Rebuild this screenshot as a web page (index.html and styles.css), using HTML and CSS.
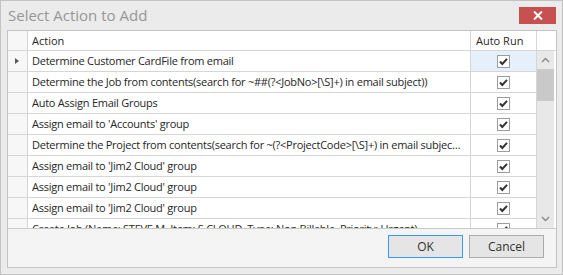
FILE: index.html
```html
<!DOCTYPE html>
<html lang="en">
<head>
  <meta charset="UTF-8" />
  <title>Select Action to Add</title>
  <link rel="stylesheet" href="styles.css">
</head>
<body>
  <div class="window">
    <div class="titlebar">
      <span class="title">Select Action to Add</span>
      <button class="close" title="Close">
        <svg width="10" height="9" viewBox="0 0 10 9"><path d="M1 0.5 L9 8.5 M9 0.5 L1 8.5" stroke="#fff" stroke-width="2"/></svg>
      </button>
    </div>

    <div class="frame">
      <div class="grid">
        <div class="head">
          <div class="ind"></div>
          <div class="col-action">Action</div>
          <div class="col-run">Auto Run</div>
          <div class="col-pad"></div>
        </div>
        <div class="body">
          <div class="rows">
            <div class="row current">
              <div class="ind"><span class="arrow"></span></div>
              <div class="col-action">Determine Customer CardFile from email</div>
              <div class="col-run focus"><span class="check"></span></div>
            </div>
            <div class="row">
              <div class="ind"></div>
              <div class="col-action">Determine the Job from contents(search for ~##(?&lt;JobNo&gt;[\S]+) in email subject))</div>
              <div class="col-run"><span class="check"></span></div>
            </div>
            <div class="row">
              <div class="ind"></div>
              <div class="col-action">Auto Assign Email Groups</div>
              <div class="col-run"><span class="check"></span></div>
            </div>
            <div class="row">
              <div class="ind"></div>
              <div class="col-action">Assign email to 'Accounts' group</div>
              <div class="col-run"><span class="check"></span></div>
            </div>
            <div class="row">
              <div class="ind"></div>
              <div class="col-action">Determine the Project from contents(search for ~(?&lt;ProjectCode&gt;[\S]+) in email subject))</div>
              <div class="col-run"><span class="check"></span></div>
            </div>
            <div class="row">
              <div class="ind"></div>
              <div class="col-action">Assign email to 'Jim2 Cloud' group</div>
              <div class="col-run"><span class="check"></span></div>
            </div>
            <div class="row">
              <div class="ind"></div>
              <div class="col-action">Assign email to 'Jim2 Cloud' group</div>
              <div class="col-run"><span class="check"></span></div>
            </div>
            <div class="row">
              <div class="ind"></div>
              <div class="col-action">Assign email to 'Jim2 Cloud' group</div>
              <div class="col-run"><span class="check"></span></div>
            </div>
            <div class="row">
              <div class="ind"></div>
              <div class="col-action">Create Job (Name: STEVE M, Item: S CLOUD, Type: Non Billable, Priority: Urgent)</div>
              <div class="col-run"><span class="check"></span></div>
            </div>
          </div>
          <div class="scrollbar">
            <div class="sb-btn">
              <svg width="9" height="6" viewBox="0 0 9 6"><path d="M1 5 L4.5 1.5 L8 5" fill="none" stroke="#8a8a8a" stroke-width="1.4"/></svg>
            </div>
            <div class="sb-track"><div class="sb-thumb"></div></div>
            <div class="sb-btn">
              <svg width="9" height="6" viewBox="0 0 9 6"><path d="M1 1 L4.5 4.5 L8 1" fill="none" stroke="#8a8a8a" stroke-width="1.4"/></svg>
            </div>
          </div>
        </div>
      </div>

      <div class="buttons">
        <button class="btn default">OK</button>
        <button class="btn">Cancel</button>
      </div>
    </div>
  </div>

  <script>
    // draw the check glyph into every checkbox cell
    const tick = '<svg width="13" height="13" viewBox="0 0 13 13">' +
      '<rect x="0.5" y="0.5" width="12" height="12" fill="#fff" stroke="#9c9c9c"/>' +
      '<path d="M3 6.5 L5.3 9 L10 3.8" fill="none" stroke="#333" stroke-width="2"/></svg>';
    document.querySelectorAll('.check').forEach(el => el.innerHTML = tick);
  </script>
</body>
</html>
```

FILE: styles.css
```css
* {
  box-sizing: border-box;
}
body {
  margin: 0;
  background: #ebebeb;
  font-family: 'Open Sans', 'Noto Sans', sans-serif;
  font-size: 11px;
  color: #262626;
}
.window {
  width: 563px;
  height: 275px;
  border: 1px solid #c3c3c3;
  background: #ebebeb;
  padding: 0 5px 6px 6px;
  display: flex;
  flex-direction: column;
}
.titlebar {
  height: 29px;
  display: flex;
  align-items: flex-start;
  justify-content: space-between;
  flex-shrink: 0;
}
.title {
  font-size: 15px;
  color: #979797;
  margin: 4px 0 0 1px;
}
.close {
  width: 37px;
  height: 17px;
  margin: 6px 1px 0 0;
  border: none;
  background: #c75050;
  display: flex;
  align-items: center;
  justify-content: center;
  padding: 0;
}
.frame {
  flex: 1;
  border: 1px solid #c4c4c4;
  display: flex;
  flex-direction: column;
  min-height: 0;
}
.grid {
  flex: 1;
  display: flex;
  flex-direction: column;
  background: #fff;
  min-height: 0;
}
.head {
  display: flex;
  height: 20px;
  border-bottom: 1px solid #d6d6d6;
  flex-shrink: 0;
}
.head > div {
  display: flex;
  align-items: center;
}
.ind {
  width: 20px;
  flex-shrink: 0;
  background: #f7f7f7;
  border-right: 1px solid #d6d6d6;
  display: flex;
  align-items: center;
  justify-content: center;
}
.col-action {
  width: 443px;
  flex-shrink: 0;
  padding-left: 4px;
  border-right: 1px solid #d6d6d6;
  white-space: nowrap;
  overflow: hidden;
  text-overflow: ellipsis;
}
.row .col-action {
  line-height: 20px;
  letter-spacing: -0.25px;
  padding-right: 9px;
}
.col-run {
  width: 66px;
  flex-shrink: 0;
  border-right: 1px solid #d6d6d6;
}
.head .col-run {
  padding-left: 5px;
}
.col-pad {
  flex: 1;
}
.body {
  flex: 1;
  display: flex;
  min-height: 0;
}
.rows {
  width: 529px;
  overflow: hidden;
}
.row {
  display: flex;
  height: 21px;
  border-bottom: 1px solid #d6d6d6;
}
.row .col-run {
  display: flex;
  align-items: center;
  justify-content: center;
  padding-right: 1px;
}
.focus {
  background: #e6f0fa;
}
.check {
  display: flex;
  width: 13px;
  height: 13px;
}
.arrow {
  width: 0;
  height: 0;
  border-left: 4px solid #5a5a5a;
  border-top: 3.5px solid transparent;
  border-bottom: 3.5px solid transparent;
  margin-left: -2px;
}
.scrollbar {
  width: 17px;
  background: #e8e8e8;
  display: flex;
  flex-direction: column;
}
.sb-btn {
  height: 18px;
  display: flex;
  align-items: center;
  justify-content: center;
}
.sb-track {
  flex: 1;
}
.sb-thumb {
  height: 32px;
  background: #c9c9c9;
}
.buttons {
  height: 39px;
  flex-shrink: 0;
  border-top: 1px solid #c9c9c9;
  background: #f4f4f4;
  display: flex;
  justify-content: flex-end;
  align-items: flex-start;
  gap: 6px;
  padding: 6px 12px 0 0;
}
.btn {
  width: 75px;
  height: 23px;
  font-family: inherit;
  font-size: 12px;
  color: #333;
  background: #e5e5e5;
  border: 1px solid #acacac;
  padding: 0;
}
.btn.default {
  border-color: #3399ff;
}
```
